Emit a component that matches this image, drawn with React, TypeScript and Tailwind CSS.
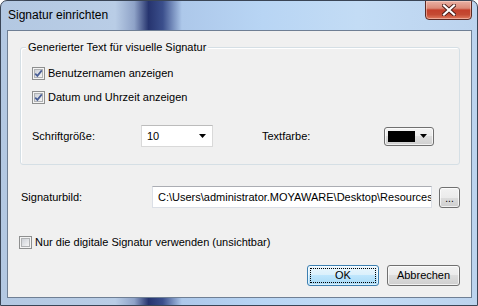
import React from "react";

const font = { fontFamily: '"Liberation Sans", Arial, sans-serif' };

function CheckBox({ checked }: { checked: boolean }) {
  return (
    <svg width="13" height="13" viewBox="0 0 13 13" className="shrink-0">
      <defs>
        <linearGradient id="cbg" x1="0" y1="0" x2="1" y2="1">
          <stop offset="0" stopColor="#cbcfd5" />
          <stop offset="1" stopColor="#f7f7f7" />
        </linearGradient>
      </defs>
      <rect x="0.5" y="0.5" width="12" height="12" fill="#f4f4f4" stroke="#8e8f8f" />
      <rect x="2.5" y="2.5" width="8" height="8" fill="url(#cbg)" stroke="#b0b2b4" />
      {checked && (
        <path d="M3.2 6.6 L5.4 8.9 L9.8 3.4" fill="none" stroke="#4a5f97" strokeWidth="1.7" strokeLinejoin="miter" />
      )}
    </svg>
  );
}

function Arrow() {
  return (
    <svg width="7" height="4" viewBox="0 0 7 4" className="shrink-0">
      <path d="M0 0 H7 L3.5 4 Z" fill="#000" />
    </svg>
  );
}

export default function App() {
  return (
    <div
      style={font}
      className="w-[478px] h-[306px] flex flex-col rounded-t-[7px] border border-[#3a4556] text-[11px] text-black leading-[15px] bg-[linear-gradient(90deg,#b3c8e2_0%,#b9cde6_24%,#8fa3c8_28%,#26346f_31%,#3b4f8c_34%,#adc8ea_38%,#b8d5f4_55%,#c3dcf5_75%,#bcd3ee_100%)] overflow-hidden"
    >
      {/* Title bar */}
      <div className="h-[29px] flex items-start shrink-0">
        <div className="pl-[7px] pt-[7px] text-[12px] leading-[15px] text-black">Signatur einrichten</div>
        <div className="ml-auto mr-[5px] -mt-[1px] w-[47px] h-[20px] rounded-b-[4px] border border-[#5b2a24] bg-[linear-gradient(180deg,#eab1a4_0%,#dc8a78_40%,#c4402b_50%,#c44a33_75%,#e07a5e_100%)] flex items-center justify-center shadow-[inset_0_0_0_1px_rgba(255,220,210,0.5)]">
          <svg width="14" height="12" viewBox="0 0 14 12">
            <path d="M2 1.5 L12 10.5 M12 1.5 L2 10.5" stroke="#4a1d18" strokeWidth="4" strokeLinecap="square" />
            <path d="M2 1.5 L12 10.5 M12 1.5 L2 10.5" stroke="#ffffff" strokeWidth="2.2" strokeLinecap="square" />
          </svg>
        </div>
      </div>

      {/* Client area */}
      <div className="ml-[6px] mr-[5px] mb-[7px] flex-1 border border-[#6f7f94] bg-[#f0f0f0] flex flex-col">
        {/* Group box */}
        <div className="mt-[16px] ml-[12px] w-[440px] h-[118px] shrink-0 rounded-[3px] border border-[#d5dfe5] flex flex-col shadow-[inset_1px_1px_0_#ffffff]">
          <div className="-mt-[8px] ml-[5px] self-start px-[2px] h-[15px] bg-[#f0f0f0] whitespace-nowrap">
            Generierter Text für visuelle Signatur
          </div>
          <div className="mt-[12px] ml-[11px] h-[13px] flex items-center gap-[3px]">
            <CheckBox checked />
            <span>Benutzernamen anzeigen</span>
          </div>
          <div className="mt-[11px] ml-[11px] h-[13px] flex items-center gap-[3px]">
            <CheckBox checked />
            <span>Datum und Uhrzeit anzeigen</span>
          </div>
          <div className="mt-[21px] ml-[11px] h-[22px] flex items-center">
            <span className="w-[109px]">Schriftgröße:</span>
            <div className="w-[72px] h-[22px] bg-white border border-[#d9d9d9] border-t-[#bcbcbc] flex items-center pl-[5px] pr-[6px]">
              <span className="flex-1">10</span>
              <Arrow />
            </div>
            <span className="ml-[49px] w-[122px]">Textfarbe:</span>
            <div className="w-[50px] h-[19px] rounded-[3px] border border-[#707070] bg-[linear-gradient(180deg,#f2f2f2_0%,#ebebeb_50%,#dddddd_50%,#cfcfcf_100%)] flex items-center pl-[3px] pr-[6px] gap-[5px] shadow-[inset_0_0_0_1px_rgba(255,255,255,0.7)]">
              <div className="w-[27px] h-[11px] bg-black" />
              <Arrow />
            </div>
          </div>
        </div>

        {/* Signaturbild */}
        <div className="mt-[21px] ml-[13px] h-[22px] flex items-center shrink-0">
          <span className="w-[131px]">Signaturbild:</span>
          <div className="w-[280px] h-[22px] bg-white border border-[#dbdfe6] border-t-[#abadb3] flex items-center pl-[5px] overflow-hidden whitespace-nowrap">
            C:\Users\administrator.MOYAWARE\Desktop\Resources
          </div>
          <div className="ml-[7px] w-[21px] h-[21px] rounded-[3px] border border-[#707070] bg-[linear-gradient(180deg,#f2f2f2_0%,#ebebeb_50%,#dddddd_50%,#cfcfcf_100%)] flex items-end justify-center pb-[4px] shadow-[inset_0_0_0_1px_rgba(255,255,255,0.7)] leading-[8px] text-[10px]">
            ...
          </div>
        </div>

        {/* Invisible signature */}
        <div className="mt-[28px] ml-[11px] h-[13px] flex items-center gap-[3px] shrink-0">
          <CheckBox checked={false} />
          <span>Nur die digitale Signatur verwenden (unsichtbar)</span>
        </div>

        {/* Buttons */}
        <div className="mt-[16px] mr-[11px] flex justify-end gap-[8px] shrink-0">
          <div className="w-[72px] h-[21px] rounded-[3px] border border-[#3c7fb1] bg-[linear-gradient(180deg,#eaf6fd_0%,#d9f0fc_50%,#bee6fd_50%,#a7d9f5_100%)] p-[2px] shadow-[inset_0_0_0_1px_rgba(255,255,255,0.6)]">
            <div className="w-full h-full border border-dotted border-black flex items-center justify-center">OK</div>
          </div>
          <div className="w-[73px] h-[21px] rounded-[3px] border border-[#707070] bg-[linear-gradient(180deg,#f2f2f2_0%,#ebebeb_50%,#dddddd_50%,#cfcfcf_100%)] flex items-center justify-center shadow-[inset_0_0_0_1px_rgba(255,255,255,0.7)]">
            Abbrechen
          </div>
        </div>
      </div>
    </div>
  );
}
